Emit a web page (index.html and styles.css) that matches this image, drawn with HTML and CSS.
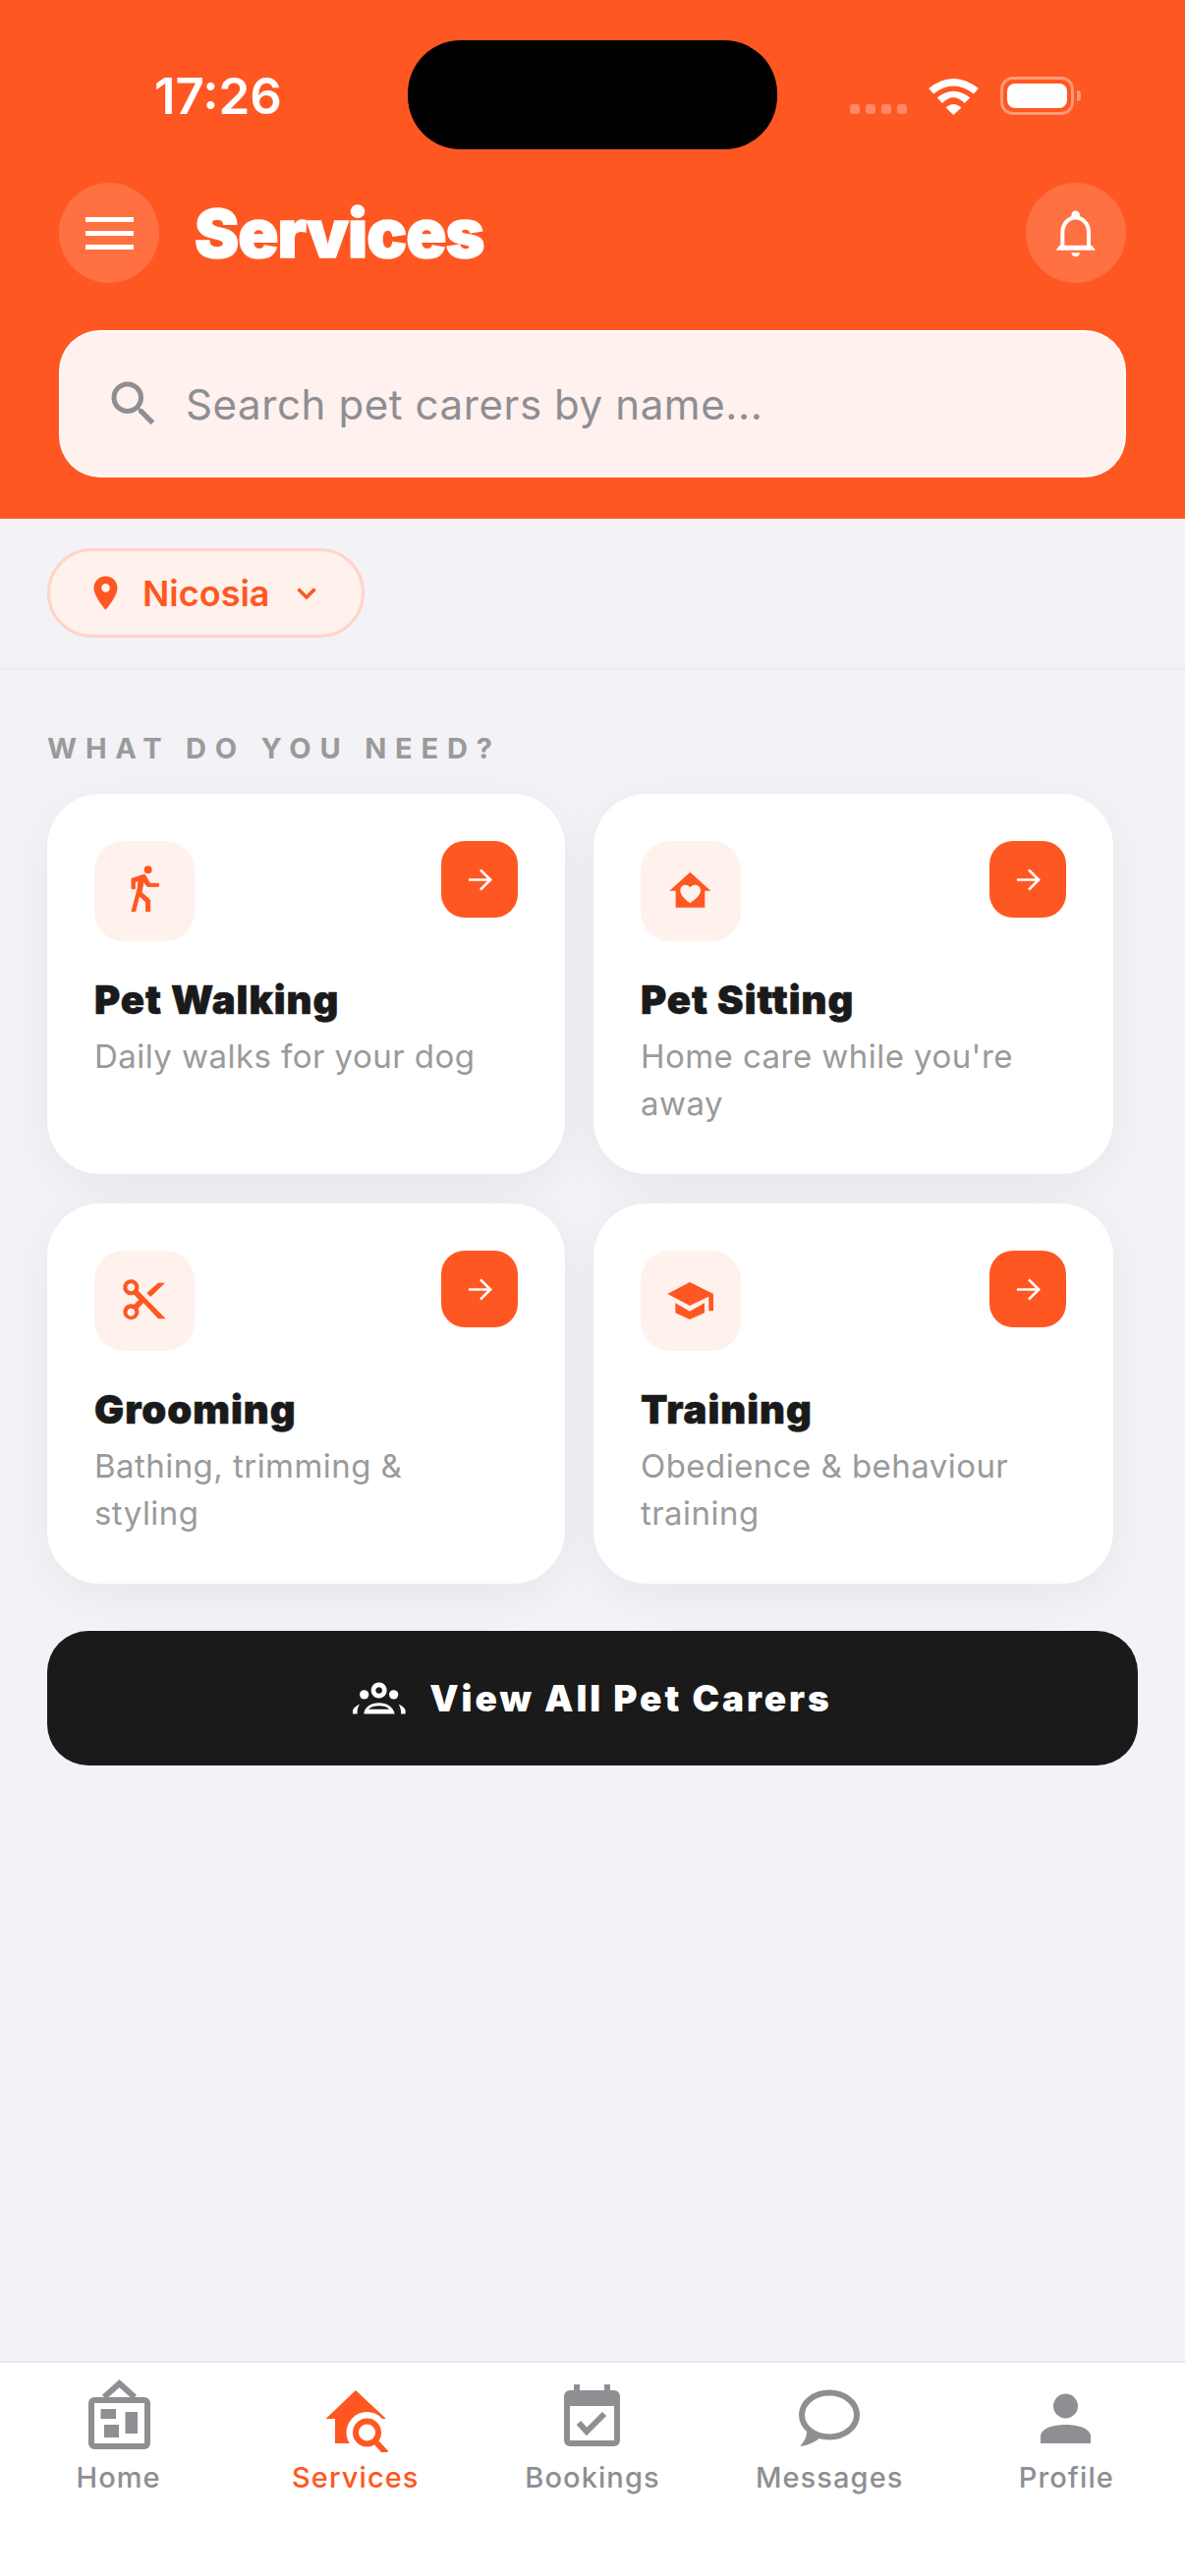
FILE: index.html
```html
<!DOCTYPE html>
<html lang="en">
<head>
    <meta charset="UTF-8">
    <meta name="viewport" content="width=device-width, initial-scale=1.0">
    <title>Services</title>
    <link rel="stylesheet" href="styles.css">
</head>
<body>
    <header class="header">
        <div class="status-bar">
            <span class="time">17:26</span>
            <div class="island"></div>
            <div class="status-icons">
                <div class="signal"><i></i><i></i><i></i><i></i></div>
                <svg class="wifi" viewBox="316 85 151 113"><path d="M316 118Q391 58 467 118L452 134Q391 86 331 134Z"/><path d="M342 146Q391 106 441 146L425 162Q391 128 357 162Z"/><path d="M368 176Q391 154 415 176L391 198Z"/></svg>
                <div class="battery"><div class="battery-level"></div></div>
                <div class="battery-nub"></div>
            </div>
        </div>
        <div class="top-bar">
            <button class="round-btn">
                <svg class="menu-icon" viewBox="0 0 49 33"><path d="M0 0h49v5H0zM0 14h49v5H0zM0 28h49v5H0z"/></svg>
            </button>
            <h1 class="title">Services</h1>
            <button class="round-btn">
                <svg class="bell-icon" viewBox="700 490 132 152"><circle cx="765" cy="510" r="13"/><path class="bell-dome" d="M725 612V562a40 44 0 0 1 80 0V612"/><path d="M705 618L716 603H814L826 618Z"/><path d="M752 625h26a13 12 0 0 1-26 0Z"/></svg>
            </button>
        </div>
        <div class="search">
            <svg class="search-icon" viewBox="0 0 24 24"><path d="M15.5 14h-.79l-.28-.27A6.47 6.47 0 0 0 16 9.5 6.5 6.5 0 1 0 9.5 16c1.61 0 3.09-.59 4.23-1.57l.27.28v.79l5 4.99L20.49 19l-4.99-5zm-6 0C7.01 14 5 11.99 5 9.5S7.01 5 9.5 5 14 7.01 14 9.5 11.99 14 9.5 14z"/></svg>
            <span class="search-text">Search pet carers by name...</span>
        </div>
    </header>

    <div class="location-bar">
        <div class="location-chip">
            <svg class="pin-icon" viewBox="0 0 24 24"><path d="M12 2C8.13 2 5 5.13 5 9c0 5.25 7 13 7 13s7-7.75 7-13c0-3.87-3.13-7-7-7zm0 9.5a2.5 2.5 0 0 1 0-5 2.5 2.5 0 0 1 0 5z"/></svg>
            <span class="location-name">Nicosia</span>
            <svg class="chevron" viewBox="0 0 20 12"><path d="M1.5 1.5L10 10l8.500-8.500"/></svg>
        </div>
    </div>

    <main class="content">
        <h2 class="section-label">WHAT DO YOU NEED?</h2>
        <div class="services">
            <div class="card">
                <div class="card-top">
                    <div class="tile">
                        <svg viewBox="108 48 306 306"><circle cx="272" cy="136" r="12"/><path class="walker" d="M222 163L262 150L278 178H304V187H270L258 172L252 205L278 228V263H266V235L245 215L233 263H222L240 195L243 170L232 172V194H222Z"/></svg>
                    </div>
                    <div class="go"><svg viewBox="0 0 26 26"><path d="M1 13H24M13.500 2.500L24 13L13.500 23.500"/></svg></div>
                </div>
                <h3 class="card-title">Pet Walking</h3>
                <p class="card-desc">Daily walks for your dog</p>
            </div>
            <div class="card">
                <div class="card-top">
                    <div class="tile">
                        <svg viewBox="39 48 306 306"><path fill-rule="evenodd" d="M190 143L253 200H235V251H146V200H127ZM190 190C182 177 160 180 160 200C160 215 178 228 190 238C202 228 222 215 222 200C222 180 198 177 190 190Z"/></svg>
                    </div>
                    <div class="go"><svg viewBox="0 0 26 26"><path d="M1 13H24M13.500 2.500L24 13L13.500 23.500"/></svg></div>
                </div>
                <h3 class="card-title">Pet Sitting</h3>
                <p class="card-desc">Home care while you're away</p>
            </div>
            <div class="card">
                <div class="card-top">
                    <div class="tile">
                        <svg viewBox="0 0 306 306"><path fill-rule="evenodd" d="M112 88a24 24 0 0 1 22 34L218 208H195L150 160L134 176a24 24 0 1 1-13-12L136 150L121 134A24 24 0 1 1 112 88ZM112 100a12 12 0 1 0 .1 0ZM112 176a12 12 0 1 0 .1 0Z"/><path d="M195 98H216L172 141L160 129Z"/></svg>
                    </div>
                    <div class="go"><svg viewBox="0 0 26 26"><path d="M1 13H24M13.500 2.500L24 13L13.500 23.500"/></svg></div>
                </div>
                <h3 class="card-title">Grooming</h3>
                <p class="card-desc">Bathing, trimming &amp; styling</p>
            </div>
            <div class="card">
                <div class="card-top">
                    <div class="tile">
                        <svg viewBox="0 0 306 306"><path d="M82 132L150 96L222 132V184H208V140L150 168Z"/><path d="M106 160L150 185L195 160V190L150 210L106 190Z"/></svg>
                    </div>
                    <div class="go"><svg viewBox="0 0 26 26"><path d="M1 13H24M13.500 2.500L24 13L13.500 23.500"/></svg></div>
                </div>
                <h3 class="card-title">Training</h3>
                <p class="card-desc">Obedience &amp; behaviour training</p>
            </div>
        </div>
        <button class="view-all">
            <svg class="people-icon" viewBox="30 40 162 98"><path fill-rule="evenodd" d="M110 41a24 24 0 1 1-.1 0ZM110 55a10 10 0 1 0 .1 0Z"/><circle cx="65" cy="78" r="14"/><circle cx="155" cy="78" r="14"/><path fill-rule="evenodd" d="M64 137C66 116 85 103 110 103S154 116 158 137ZM78 123H142C134 114 122 112 110 112S86 114 78 123Z"/><path d="M30 137V126C33 118 42 112 51 108C46 116 43 126 44 137Z"/><path d="M191 137V126C188 118 179 112 170 108C175 116 178 126 177 137Z"/></svg>
            <span>View All Pet Carers</span>
        </button>
    </main>

    <nav class="tab-bar">
        <div class="tab">
            <svg viewBox="78 2422 84 74">
                <path class="tab-line" d="M105 2440L120.500 2426L136 2440"/>
                <path class="tab-line" d="M95 2443H146a3 3 0 0 1 3 3V2487a3 3 0 0 1-3 3H95a3 3 0 0 1-3-3V2446a3 3 0 0 1 3-3Z"/>
                <path d="M101.500 2452H117V2462H101.500ZM105 2468H120V2481H105ZM126.500 2455H139V2477H126.500Z"/>
            </svg>
            <span>Home</span>
        </div>
        <div class="tab active">
            <svg viewBox="319 2422 84 74">
                <path d="M361 2433L392 2462H383V2487H340V2462H330.500Z"/>
                <circle class="halo" cx="372.500" cy="2476" r="21"/>
                <circle class="tab-line" cx="372.500" cy="2476" r="11.500"/>
                <path class="tab-line" d="M381 2485L392 2497"/>
            </svg>
            <span>Services</span>
        </div>
        <div class="tab">
            <svg viewBox="561 2422 84 74">
                <path d="M584 2427H590V2433H615V2427H621V2433H625a6 6 0 0 1 6 6V2484a6 6 0 0 1-6 6H580a6 6 0 0 1-6-6V2439a6 6 0 0 1 6-6H584ZM580 2449V2484H625V2449Z" fill-rule="evenodd"/>
                <path class="tab-line" d="M589 2466L597 2475L615 2457"/>
            </svg>
            <span>Bookings</span>
        </div>
        <div class="tab">
            <svg viewBox="802 2422 84 74">
                <ellipse class="tab-line" cx="844" cy="2458" rx="28" ry="22.500"/>
                <path d="M821 2475C821 2481 818 2486 814 2490C822 2489 829 2486 835 2481Z"/>
            </svg>
            <span>Messages</span>
        </div>
        <div class="tab">
            <svg viewBox="1044 2422 84 74">
                <ellipse cx="1085.500" cy="2449" rx="12.500" ry="12.500"/>
                <path d="M1060 2487V2480C1060 2472 1072 2468 1085.500 2468S1111 2472 1111 2480V2487Z"/>
            </svg>
            <span>Profile</span>
        </div>
    </nav>
</body>
</html>
```

FILE: styles.css
```css
* {
    box-sizing: border-box;
}
html, body {
    margin: 0;
    height: 100%;
}
body {
    display: flex;
    flex-direction: column;
    font-family: Inter, "Noto Sans", sans-serif;
    background-color: #f2f2f7;
    overflow: hidden;
}
button {
    border: none;
    padding: 0;
    font-family: inherit;
}
h1, h2, h3, p {
    margin: 0;
}

/* Orange header */
.header {
    background-color: #ff5722;
    height: 528px;
    padding: 0 60px;
}
.status-bar {
    position: relative;
    height: 186px;
    display: flex;
    justify-content: space-between;
    align-items: flex-start;
    color: #fff;
}
.time {
    margin: 68px 0 0 97px;
    font-size: 51px;
    line-height: 60px;
    font-weight: 600;
}
.island {
    position: absolute;
    left: 355px;
    top: 41px;
    width: 376px;
    height: 111px;
    border-radius: 54px;
    background-color: #000;
}
.status-icons {
    display: flex;
    align-items: flex-start;
    margin: 78px 46px 0 0;
}
.signal {
    display: flex;
    gap: 6px;
    margin-top: 28px;
}
.signal i {
    width: 10px;
    height: 10px;
    border-radius: 3px;
    background-color: rgba(255, 255, 255, 0.3);
}
.wifi {
    width: 51px;
    height: 38px;
    margin: 1px 0 0 22px;
    fill: #fff;
}
.battery {
    width: 75px;
    height: 39px;
    margin-left: 22px;
    padding: 4px;
    border: 3px solid rgba(255, 255, 255, 0.4);
    border-radius: 13px;
}
.battery-level {
    height: 100%;
    border-radius: 8px;
    background-color: #fff;
}
.battery-nub {
    width: 4px;
    height: 11px;
    margin: 14px 0 0 3px;
    border-radius: 0 4px 4px 0;
    background-color: rgba(255, 255, 255, 0.4);
}
.top-bar {
    display: flex;
    align-items: center;
    height: 102px;
}
.round-btn {
    width: 102px;
    height: 102px;
    flex-shrink: 0;
    display: flex;
    justify-content: center;
    align-items: center;
    border-radius: 50%;
    background-color: rgba(255, 255, 255, 0.15);
}
.menu-icon {
    width: 49px;
    height: 33px;
    fill: #fff;
}
.bell-icon {
    width: 44px;
    height: 51px;
    fill: #fff;
}
.bell-dome {
    fill: none;
    stroke: #fff;
    stroke-width: 12;
}
.title {
    flex: 1;
    margin-left: 36px;
    font-size: 68px;
    line-height: 80px;
    font-weight: 900;
    letter-spacing: -1px;
    -webkit-text-stroke: 1.5px #fff;
    color: #fff;
}
.search {
    display: flex;
    align-items: center;
    height: 150px;
    margin-top: 48px;
    padding-left: 44px;
    border: 2px solid rgba(255, 255, 255, 0.7);
    border-radius: 42px;
    background-color: #fff1ee;
}
.search-icon {
    width: 60px;
    height: 60px;
    fill: #8e8e93;
}
.search-text {
    margin-left: 23px;
    font-size: 42px;
    letter-spacing: 0.6px;
    color: #8e8e93;
}

/* Location */
.location-bar {
    height: 154px;
    padding: 30px 48px 0;
    border-bottom: 3px solid #ececef;
}
.location-chip {
    display: flex;
    align-items: center;
    width: 323px;
    height: 91px;
    padding-left: 36px;
    border: 3px solid #ffd4c8;
    border-radius: 46px;
    background-color: #fff1ec;
}
.pin-icon {
    width: 41px;
    height: 41px;
    fill: #ff5722;
}
.location-name {
    margin-left: 17px;
    font-size: 36px;
    font-weight: 600;
    color: #ff5722;
}
.chevron {
    width: 20px;
    height: 12px;
    margin-left: 27px;
    fill: none;
    stroke: #ff5722;
    stroke-width: 3.5;
}

/* Services grid */
.content {
    flex: 1;
    padding: 62px 48px 0;
}
.section-label {
    font-size: 29px;
    line-height: 36px;
    font-weight: 700;
    letter-spacing: 8.8px;
    color: #9a9a9a;
}
.services {
    display: grid;
    grid-template-columns: 527px 529px;
    gap: 30px 29px;
    margin-top: 28px;
}
.card {
    height: 387px;
    padding: 48px;
    border-radius: 54px;
    background-color: #fff;
    box-shadow: 0 12px 50px rgba(0, 0, 0, 0.05);
}
.card-top {
    display: flex;
    justify-content: space-between;
    align-items: flex-start;
}
.tile {
    width: 102px;
    height: 102px;
    border-radius: 30px;
    background-color: #fff1ec;
}
.tile svg {
    display: block;
    width: 102px;
    height: 102px;
    fill: #ff5722;
}
.walker {
    stroke: #ff5722;
    stroke-width: 3;
}
.go {
    display: flex;
    justify-content: center;
    align-items: center;
    width: 78px;
    height: 78px;
    border-radius: 24px;
    background-color: #ff5722;
}
.go svg {
    width: 25px;
    height: 25px;
    fill: none;
    stroke: #fff;
    stroke-width: 2.8;
}
.card-title {
    margin-top: 35px;
    font-size: 40px;
    line-height: 50px;
    font-weight: 900;
    letter-spacing: 1px;
    -webkit-text-stroke: 0.6px #1a1a1a;
    color: #1a1a1a;
}
.card-desc {
    max-width: 400px;
    margin-top: 8px;
    font-size: 33px;
    line-height: 48px;
    letter-spacing: 0.45px;
    color: #9a9a9a;
}
.view-all {
    display: flex;
    justify-content: center;
    align-items: center;
    width: 1110px;
    height: 137px;
    margin-top: 48px;
    border-radius: 42px;
    background-color: #1a1a1a;
    color: #fff;
    font-size: 37px;
    font-weight: 900;
    letter-spacing: 2.9px;
}
.people-icon {
    width: 54px;
    height: 33px;
    margin-right: 24px;
    fill: #fff;
}

/* Bottom tabs */
.tab-bar {
    display: grid;
    grid-template-columns: repeat(5, 1fr);
    height: 219px;
    padding-top: 17px;
    border-top: 2px solid #e9e9ec;
    background-color: #fff;
}
.tab {
    display: flex;
    flex-direction: column;
    align-items: center;
    font-size: 29px;
    line-height: 36px;
    font-weight: 500;
    letter-spacing: 1.1px;
    color: #8e8e93;
}
.tab svg {
    width: 84px;
    height: 74px;
    margin-bottom: 8px;
    fill: #8e8e93;
}
.tab-line {
    fill: none;
    stroke: #8e8e93;
    stroke-width: 6;
}
.active {
    color: #ff5722;
}
.active svg {
    fill: #ff5722;
}
.active .tab-line {
    stroke: #ff5722;
}
.active .halo {
    fill: #fff;
}
```
